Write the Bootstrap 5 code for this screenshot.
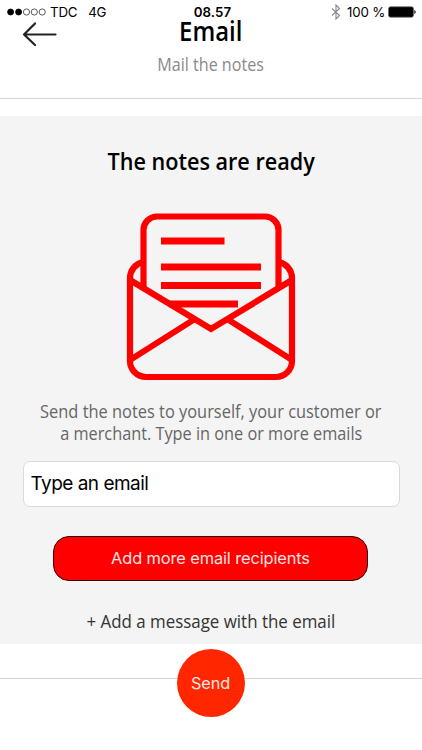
<!DOCTYPE html>
<html lang="en">
<head>
<meta charset="utf-8">
<meta name="viewport" content="width=device-width, initial-scale=1">
<title>Email</title>
<link href="https://cdn.jsdelivr.net/npm/bootstrap@5.3.0/dist/css/bootstrap.min.css" rel="stylesheet">
<style>
body{font-family:Inter,"Liberation Sans",sans-serif;color:#111;min-height:750px;overflow:hidden}
.fit{display:inline-block;white-space:nowrap;font-family:"Open Sans","Noto Sans",sans-serif;transform:scaleX(var(--sx,1))}
.statusbar{height:16px;line-height:24px;font-size:13.3px;padding:0 6px 0 7px}
.statusbar>div{height:24px}
.side{width:150px}
.carrier{margin-left:3px;letter-spacing:-.2px}
.network{margin-left:11px;letter-spacing:-.3px}
.clock{letter-spacing:.1px;padding-left:2px}
.battery-text{margin-left:6px;letter-spacing:-.2px}
.battery{margin-left:3px}
.topbar{height:83px;border-bottom:1px solid #d5d5d5}
.back-slot{width:80px;padding:3px 0 0 22px}
.page-title{font-size:27px;line-height:30px;font-weight:600;color:#000;--sx:.885}
.page-sub{font-size:18px;line-height:24px;font-weight:400;color:#8a8a8a;margin-top:6px;--sx:.895}
.panel{margin-top:17px;height:528px;background:#f4f4f4}
.ready{margin-top:30px;height:30px;line-height:30px;font-size:24px;font-weight:600;color:#000;--sx:.9}
.envelope{margin-top:36px}
.info{margin-top:18px;height:44px;font-size:19px;line-height:22px;font-weight:400;color:#666}
.l1{--sx:.863}.l2{--sx:.857}
.email-box{width:377px;height:46px;margin-top:17px;border:1px solid #dadada;border-radius:7px;padding:0 7px;font-size:19px;letter-spacing:-.52px;color:#000}
.more-btn,.more-btn:hover{width:315px;height:45px;margin-top:29px;margin-right:1px;background:#f00;border:1px solid #300;border-radius:16px;color:#ffe3e3;font-size:16.4px;letter-spacing:-.12px}
.message{margin-top:27px;height:26px;line-height:26px;font-size:19px;font-weight:400;color:#333;--sx:.89}
.sendbar{height:106px}
.rule{height:1px;background:#d2d2d2;margin-top:34px}
.send-btn,.send-btn:hover{width:68px;height:68px;margin-top:5px;margin-left:-1px;background:#ff2600;color:#ffe9e3;font-size:16.2px;letter-spacing:-.1px}
</style>
<script src="https://cdn.jsdelivr.net/npm/bootstrap@5.3.0/dist/js/bootstrap.bundle.min.js"></script>
</head>
<body class="bg-white d-flex flex-column">
<div class="statusbar d-flex justify-content-between text-black">
  <div class="side d-flex align-items-center">
    <svg width="40" height="10" viewBox="0 0 40 10"><g stroke="#000" stroke-width=".8"><circle cx="3.6" cy="5" r="3"/><circle cx="11.6" cy="5" r="3"/><g fill="none" stroke="#333"><circle cx="19.5" cy="5" r="3.1"/><circle cx="27.3" cy="5" r="3.1"/><circle cx="35.2" cy="5" r="3.1"/></g></g></svg>
    <span class="carrier">TDC</span><span class="network">4G</span>
  </div>
  <div class="clock fw-semibold">08.57</div>
  <div class="side d-flex align-items-center justify-content-end">
    <svg width="10" height="16" viewBox="0 0 10 16" fill="none" stroke="#888" stroke-width="1.1"><path d="M1 4.500 8.500 11.500 5 15V1l3.500 3.500L1 11.500"/></svg>
    <span class="battery-text">100 %</span>
    <svg class="battery" width="28" height="12" viewBox="0 0 28 12"><rect x=".5" y=".8" width="25" height="10.400" rx="2" fill="#000" stroke="#666" stroke-width=".7"/><path d="M26.400 4v4q1.300-.6 1.300-2t-1.300-2z"/></svg>
  </div>
</div>
<header class="topbar d-flex">
  <div class="back-slot"><svg width="36" height="26" viewBox="0 0 36 26" fill="none" stroke="#222" stroke-width="2.200" stroke-linecap="round" stroke-linejoin="round"><path d="M13 3.500 2 14.500l11 10.500M2 14.500h31.500"/></svg></div>
  <div class="flex-fill d-flex flex-column align-items-center">
    <h1 class="fit page-title mb-0">Email</h1>
    <div class="fit page-sub">Mail the notes</div>
  </div>
  <div class="back-slot"></div>
</header>
<main class="panel d-flex flex-column align-items-center">
  <h2 class="fit ready mb-0">The notes are ready</h2>
  <svg class="envelope flex-shrink-0" width="170" height="170" viewBox="126 212 170 170" fill="none" stroke="#f00" stroke-width="6.200">
    <path d="M143.500 287V230A13.500 13.500 0 0 1 157 216.500H265A13.500 13.500 0 0 1 278.500 230V287"/>
    <path d="M143 262A16.500 16.500 0 0 0 130 278V361A16 16 0 0 0 146 377H276A16 16 0 0 0 292 361V278A16.500 16.500 0 0 0 279 262"/>
    <path d="M130 280 211 329 292 280M130 360 194 319.500M292 360 228 319.500"/>
    <path stroke-width="7" d="M161 241h63.500M161 267h100M161 285.500h100M169 304h69"/>
  </svg>
  <div class="info text-center d-flex flex-column align-items-center">
    <span class="fit l1">Send the notes to yourself, your customer or</span>
    <span class="fit l2">a merchant. Type in one or more emails</span>
  </div>
  <div class="email-box bg-white d-flex align-items-center">Type an email</div>
  <button type="button" class="more-btn btn p-0">Add more email recipients</button>
  <div class="fit message">+ Add a message with the email</div>
</main>
<footer class="sendbar d-flex justify-content-center">
  <div class="rule flex-fill"></div>
  <button type="button" class="send-btn btn rounded-circle p-0 border-0">Send</button>
  <div class="rule flex-fill"></div>
</footer>
</body>
</html>
